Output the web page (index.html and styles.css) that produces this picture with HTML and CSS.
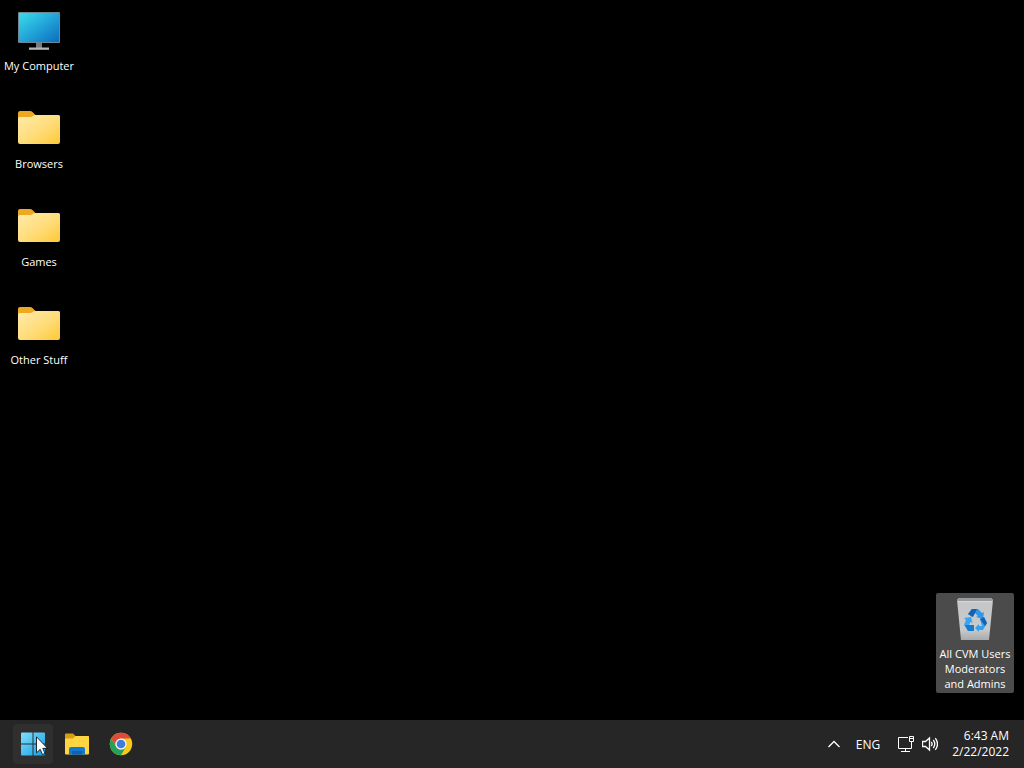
FILE: index.html
```html
<!DOCTYPE html>
<html lang="en">
<head>
<meta charset="utf-8">
<title>Desktop</title>
<link rel="stylesheet" href="styles.css">
</head>
<body>
<svg class="defs" aria-hidden="true">
  <defs>
    <linearGradient id="screen" x1="0" y1="0" x2="1" y2="1"><stop offset="0" stop-color="#3bdcea"/><stop offset=".5" stop-color="#22a5d9"/><stop offset="1" stop-color="#0c6dbd"/></linearGradient>
    <linearGradient id="front" x1="0" y1="0" x2="1" y2="1"><stop offset="0" stop-color="#ffebac"/><stop offset=".55" stop-color="#ffdc78"/><stop offset="1" stop-color="#fdc935"/></linearGradient>
    <linearGradient id="bin" x1="0" y1="0" x2="0" y2="1"><stop offset="0" stop-color="#c4c5c6"/><stop offset=".75" stop-color="#c9cacb"/><stop offset="1" stop-color="#a9aaab"/></linearGradient>
    <linearGradient id="pane" x1="0" y1="0" x2="1" y2="1"><stop offset="0" stop-color="#80e0fb"/><stop offset="1" stop-color="#149be4"/></linearGradient>
    <symbol id="folder" viewBox="0 0 48 48">
      <path d="M3 9q0-2 2-2h10q1.500 0 2.500 1l3 3H43q2 0 2 2v8H3z" fill="#eda922"/>
      <path d="M3 14.500q0-1.500 2-1.500h10q1.500 0 2.500-.8l1-.7q.8-.5 2-.5H43q2 0 2 2v25q0 2-2 2H5q-2 0-2-2z" fill="url(#front)"/>
    </symbol>
  </defs>
</svg>
<main class="desktop">
  <nav class="shortcuts" aria-label="Desktop shortcuts">
    <button class="shortcut" type="button">
      <svg class="shortcut-icon" viewBox="0 0 48 48" aria-hidden="true">
        <path d="M21 37h6v5h-6z" fill="#777b80"/><path d="M14 41.500h20v2.300H14z" fill="#b5b5b6"/>
        <rect x="3" y="6" width="42" height="31" rx="1" fill="#6d8794"/>
        <rect x="4" y="7" width="40" height="29" fill="url(#screen)"/>
      </svg>
      <span class="shortcut-label">My Computer</span>
    </button>
    <button class="shortcut" type="button">
      <svg class="shortcut-icon" viewBox="0 0 48 48" aria-hidden="true"><use href="#folder"/></svg>
      <span class="shortcut-label">Browsers</span>
    </button>
    <button class="shortcut" type="button">
      <svg class="shortcut-icon" viewBox="0 0 48 48" aria-hidden="true"><use href="#folder"/></svg>
      <span class="shortcut-label">Games</span>
    </button>
    <button class="shortcut" type="button">
      <svg class="shortcut-icon" viewBox="0 0 48 48" aria-hidden="true"><use href="#folder"/></svg>
      <span class="shortcut-label">Other Stuff</span>
    </button>
  </nav>
  <button class="shortcut selected" type="button">
    <svg class="shortcut-icon" viewBox="0 0 48 48" aria-hidden="true">
      <path d="M6 6l2-2h32l2 2-4 40H10z" fill="url(#bin)"/>
      <path d="M6 6l2-2h32l2 2-1 2H7z" fill="#989a9c"/>
      <path d="M7 7h34v1.200H7z" fill="#d6d7d8"/>
      <path d="M17 20l4-5h6l4 4 2-1-1 7-7-2 2-1-3-3-3 4z" fill="#2f97e8"/>
      <path d="M17 20l4-5h5l-4 8z" fill="#1262b5"/>
      <path d="M13 24l7-1 1.500 6-2-1-1.500 3 4 1v5h-5l-4-6 2-5z" fill="#3ba4ef"/>
      <path d="M17 31h6v6h-6l-3-6z" fill="#167bd2"/>
      <path d="M29 25l4-2 3 6-4 7h-4v2l-4-4 4-4v2h3z" fill="#36a1ee"/>
      <path d="M29 25l4-2 3 6-2 3z" fill="#1262b5"/>
    </svg>
    <span class="shortcut-label">All CVM Users Moderators and Admins</span>
  </button>
</main>
<footer class="taskbar">
  <nav class="apps" aria-label="Taskbar">
    <button class="app active" type="button" aria-label="Start">
      <svg class="app-icon" viewBox="0 0 26 26" aria-hidden="true">
        <path d="M2 1.500h10.500v11H1v-10q0-1 1-1zM13.500 1.500H24q1 0 1 1v10H13.500zM1 13.500h11.500v11H2q-1 0-1-1zM13.500 13.500H25v10q0 1-1 1H13.500z" fill="url(#pane)"/>
      </svg>
      <svg class="cursor" viewBox="0 0 12 19" aria-hidden="true"><path d="M.5.8v16l3.700-3.500 2.300 5.200 2.500-1-2.200-5.200h4.700z" fill="#fff" stroke="#000" stroke-width=".8"/></svg>
    </button>
    <button class="app" type="button" aria-label="File Explorer">
      <svg class="app-icon" viewBox="0 0 26 26" aria-hidden="true">
        <path d="M1 3.500q0-1 1-1h7l2.500 2.500H24q1 0 1 1V12H1z" fill="#dc9c12"/>
        <path d="M1 8.500q0-1 1-1h7l2.500-2.500H24q1 0 1 1V22.500q0 1-1 1H2q-1 0-1-1z" fill="#ffd541"/>
        <path d="M5 23.500V18q0-2 2-2h12q2 0 2 2v5.500z" fill="#1478cf"/><path d="M8 20h10v3.500H8z" fill="#0b63b2"/>
      </svg>
    </button>
    <button class="app" type="button" aria-label="Google Chrome">
      <svg class="app-icon" viewBox="0 0 26 26" aria-hidden="true">
        <circle cx="13" cy="13" r="11.200" fill="#f9c91c"/>
        <path d="M3.300 7.400A11.200 11.200 0 0 1 22.700 7.400H13a5.600 5.600 0 0 0-4.850 8.400z" fill="#df4a3e"/>
        <path d="M3.300 7.400A11.200 11.200 0 0 0 13 24.200l4.850-8.400a5.600 5.600 0 0 1-9.700 0z" fill="#25a05a"/>
        <circle cx="13" cy="13" r="5.600" fill="#f3f6fa"/><circle cx="13" cy="13" r="4.300" fill="#3b7de0"/>
      </svg>
    </button>
  </nav>
  <div class="tray">
    <button class="tray-item" type="button" aria-label="Show hidden icons">
      <svg class="tray-icon" viewBox="0 0 16 16" aria-hidden="true"><path d="M2.500 11L8 5.500l5.500 5.500" class="stroke bold"/></svg>
    </button>
    <button class="tray-item" type="button">ENG</button>
    <button class="tray-item status" type="button" aria-label="Network and volume">
      <svg class="tray-icon" viewBox="0 0 16 16" aria-hidden="true"><path d="M10 1.500H.5v11h13V9M3 15.500h9M7.500 12.500v3M11.500.5h4v5h-4zM11.500 2.500h4M13.500 5.500V9" class="stroke"/></svg>
      <svg class="tray-icon" viewBox="0 0 16 16" aria-hidden="true"><path d="M.5 5.500h3l4-3.500v12l-4-3.500h-3zM9.300 6q1.600 2 0 4M11.300 4q3 4 0 8M13.300 2.200q4.400 5.800 0 11.600" class="stroke bold"/></svg>
    </button>
    <button class="tray-item clock" type="button"><time>6:43 AM</time><time>2/22/2022</time></button>
  </div>
</footer>
</body>
</html>
```
FILE: styles.css
```css
* {
  box-sizing: border-box;
}

body {
  display: flex;
  flex-direction: column;
  min-height: 100vh;
  margin: 0;
  background: #000;
  color: #fff;
  font: 12px/15px "Open Sans", "Noto Sans", sans-serif;
}

button {
  margin: 0;
  padding: 0;
  border: 0;
  background: none;
  color: inherit;
  font: inherit;
}

svg {
  display: block;
  flex: none;
}

.defs {
  position: absolute;
  width: 0;
  height: 0;
}

.desktop {
  display: flex;
  flex: 1;
  justify-content: space-between;
  padding: 5px 10px 27px 0;
}

.shortcuts {
  display: flex;
  flex-direction: column;
  gap: 28px;
}

.shortcut {
  display: flex;
  flex-direction: column;
  align-items: center;
  gap: 4px;
  width: 78px;
  padding: 1px 1px 2px;
  border-radius: 2px;
}

.shortcut.selected {
  align-self: flex-end;
  background: #4b4b4b;
}

.shortcut-icon {
  width: 48px;
  height: 48px;
}

.shortcut-label {
  font-size: 11px;
  font-weight: 500;
  text-align: center;
}

.taskbar {
  display: flex;
  align-items: center;
  justify-content: space-between;
  height: 48px;
  padding: 0 15px 0 13px;
  background: #262626;
}

.apps {
  display: flex;
  gap: 4px;
}

.app {
  position: relative;
  display: grid;
  place-items: center;
  width: 40px;
  height: 40px;
  border-radius: 4px;
}

.app.active {
  background: #2f2f2f;
}

.app-icon {
  width: 26px;
  height: 26px;
}

.cursor {
  position: absolute;
  top: 12px;
  left: 23px;
  width: 12px;
  height: 19px;
}

.tray {
  display: flex;
  align-items: center;
  gap: 14px;
}

.tray-item {
  display: flex;
  align-items: center;
}

.status {
  gap: 8px;
  padding-left: 4px;
}

.clock {
  flex-direction: column;
  align-items: flex-end;
  line-height: 16px;
}

.tray-icon {
  width: 16px;
  height: 16px;
}

.stroke {
  fill: none;
  stroke: #fff;
  stroke-width: 1;
}

.stroke.bold {
  stroke-width: 1.3;
}
```
